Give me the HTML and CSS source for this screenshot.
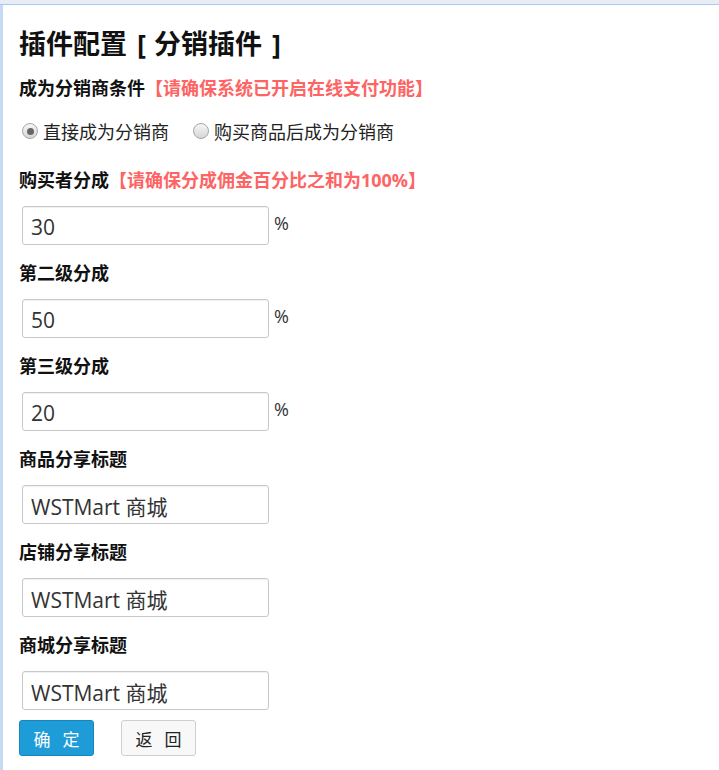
FILE: index.html
```html
<!DOCTYPE html>
<html lang="zh-CN">
<head>
    <meta charset="UTF-8">
    <title>插件配置</title>
    <link rel="stylesheet" href="styles.css">
</head>
<body>
    <div class="topbar"></div>
    <div class="main">
        <h1 class="title">插件配置<span class="bk">[</span>分销插件<span class="bk bk-r">]</span></h1>

        <div class="label label-first">成为分销商条件<span class="tip">【请确保系统已开启在线支付功能】</span></div>
        <div class="radios">
            <label class="radio"><span class="dot checked"></span>直接成为分销商</label>
            <label class="radio"><span class="dot"></span>购买商品后成为分销商</label>
        </div>

        <div class="label label-second">购买者分成<span class="tip">【请确保分成佣金百分比之和为100%】</span></div>
        <div class="field"><input class="ipt" type="text" value="30"><span class="unit">%</span></div>

        <div class="label">第二级分成</div>
        <div class="field"><input class="ipt" type="text" value="50"><span class="unit">%</span></div>

        <div class="label">第三级分成</div>
        <div class="field"><input class="ipt" type="text" value="20"><span class="unit">%</span></div>

        <div class="label">商品分享标题</div>
        <div class="field"><input class="ipt" type="text" value="WSTMart 商城"></div>

        <div class="label">店铺分享标题</div>
        <div class="field"><input class="ipt" type="text" value="WSTMart 商城"></div>

        <div class="label">商城分享标题</div>
        <div class="field last"><input class="ipt" type="text" value="WSTMart 商城"></div>

        <div class="btns">
            <button class="btn btn-blue">确 定</button>
            <button class="btn btn-white">返 回</button>
        </div>
    </div>
</body>
</html>
```

FILE: styles.css
```css
body {
    margin: 0;
    padding: 0;
    background: #fff;
    font-family: "Open Sans", "Noto Sans CJK SC", sans-serif;
    color: #111;
}

.topbar {
    height: 4px;
    background: #e8edf5;
    border-bottom: 1px solid #a9c9ef;
}

.main {
    border-left: 3px solid #c6daf4;
    padding: 24px 0 14px 16px;
    min-height: 741px;
    box-sizing: border-box;
}

.title {
    margin: 0;
    font-size: 27px;
    line-height: 30px;
    font-weight: bold;
    color: #111;
}

.bk {
    display: inline-block;
    margin: 0 8px 0 10px;
}

.bk-r {
    margin: 0 0 0 10px;
}

.label {
    font-size: 18px;
    line-height: 24px;
    font-weight: bold;
    color: #111;
}

.label-first {
    margin-top: 17px;
}

.label-second {
    margin-top: 25px;
}

.tip {
    color: #fe6464;
}

.radios {
    display: flex;
    align-items: center;
    margin-top: 19px;
    height: 24px;
    margin-left: 3px;
}

.radio {
    display: flex;
    align-items: center;
    font-size: 18px;
    color: #222;
    margin-right: 24px;
}

.dot {
    width: 16px;
    height: 16px;
    border: 1px solid #a6a6a6;
    border-radius: 50%;
    background: linear-gradient(#f6f6f6, #d6d6d6);
    box-sizing: border-box;
    margin-right: 5px;
    position: relative;
}

.dot.checked::after {
    content: "";
    position: absolute;
    left: 3.5px;
    top: 3.5px;
    width: 7px;
    height: 7px;
    border-radius: 50%;
    background: #666;
}

.field {
    display: flex;
    align-items: flex-start;
    margin: 14px 0 16px 3px;
}

.field.last {
    margin-bottom: 10px;
}

.ipt {
    width: 247px;
    height: 39px;
    box-sizing: border-box;
    border: 1px solid #c8c8c8;
    border-radius: 3px;
    box-shadow: inset 0 1px 1px rgba(0, 0, 0, 0.06);
    padding: 2px 8px 0;
    font-family: "Open Sans", "Noto Sans CJK SC", sans-serif;
    font-size: 21px;
    color: #333;
    outline: none;
}

.unit {
    font-size: 18px;
    line-height: 34px;
    margin-left: 5px;
    color: #333;
}

.btns {
    display: flex;
    gap: 27px;
}

.btn {
    width: 75px;
    height: 36px;
    border-radius: 3px;
    font-family: "Noto Sans CJK SC", sans-serif;
    font-size: 17px;
    letter-spacing: 4px;
    padding: 0 0 0 4px;
    cursor: pointer;
}

.btn-blue {
    background: #1e9cd8;
    border: 1px solid #1786c0;
    color: #fff;
}

.btn-white {
    background: #f8f8f8;
    border: 1px solid #cfcfcf;
    color: #222;
}
```
